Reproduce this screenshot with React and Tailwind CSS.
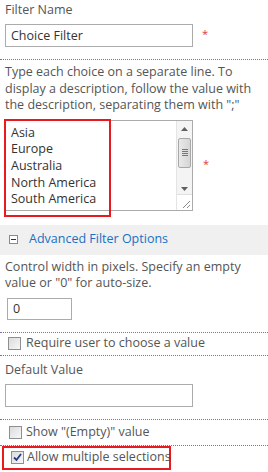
import React from 'react';

const Dotted = () => <div className="border-t border-dotted border-[#6f6fd0]" />;

const Box = ({ checked }) => (
  <span className="relative inline-block w-[13px] h-[13px] border border-[#8e8f8f] bg-gradient-to-br from-[#dcdcdc] to-[#f7f7f7] shrink-0">
    {checked && (
      <svg className="absolute left-[1px] top-[1px]" width="9" height="9" viewBox="0 0 9 9">
        <path d="M1 4.5 L3.5 7 L8 1" fill="none" stroke="#233a86" strokeWidth="1.8" />
      </svg>
    )}
  </span>
);

const Scrollbar = () => (
  <div className="w-[16px] h-full flex flex-col bg-[#f4f4f4] border-l border-[#e4e4e4]">
    <div className="h-[17px] flex items-center justify-center">
      <svg width="7" height="4" viewBox="0 0 7 4"><path d="M0 4 L3.5 0 L7 4 Z" fill="#606060" /></svg>
    </div>
    <div className="mx-[1px] h-[30px] rounded-[2px] border border-[#a8a8a8] bg-gradient-to-r from-[#e9e9e9] to-[#d6d6d6] flex flex-col items-center justify-center gap-[1px]">
      <div className="w-[6px] h-[1px] bg-[#777]" />
      <div className="w-[6px] h-[1px] bg-[#777]" />
      <div className="w-[6px] h-[1px] bg-[#777]" />
      <div className="w-[6px] h-[1px] bg-[#777]" />
    </div>
    <div className="flex-1 flex items-end justify-center pb-[3px]">
      <svg width="7" height="4" viewBox="0 0 7 4"><path d="M0 0 L3.5 4 L7 0 Z" fill="#606060" /></svg>
    </div>
    <div className="h-[16px] bg-white border-t border-[#e0e0e0] relative">
      <svg className="absolute right-[1px] bottom-[1px]" width="9" height="9" viewBox="0 0 9 9">
        <path d="M1 8 L8 1 M5 8 L8 5" stroke="#8a8a8a" strokeWidth="1" />
      </svg>
    </div>
  </div>
);

export default function App() {
  return (
    <div
      className="w-[268px] h-[472px] overflow-hidden bg-white text-[12.5px] text-[#555]"
      style={{ fontFamily: '"Open Sans", "Noto Sans", sans-serif' }}
    >
      <div className="px-[5px]">
        <div className="h-[20px] leading-[20px]">Filter Name</div>
        <div className="mt-[4px] flex items-start">
          <div className="w-[188px] h-[23px] border border-[#ababab] pl-[5px] leading-[21px] text-[#333]">Choice Filter</div>
          <span className="ml-[9px] mt-[2px] text-[#e03a3a] text-[11px]">*</span>
        </div>
      </div>
      <div className="mt-[12px]"><Dotted /></div>

      <div className="px-[5px] mt-[4px] leading-[16.5px]">
        Type each choice on a separate line. To display a description, follow the value with the description, separating them with ";"
      </div>

      <div className="px-[5px] mt-[6px] flex items-start">
        <div className="relative w-[188px] h-[91px] border border-[#ababab] flex">
          <div className="flex-1 pl-[5px] pt-[4px] leading-[16.7px] text-[#333]">
            <div>Asia</div>
            <div>Europe</div>
            <div>Australia</div>
            <div>North America</div>
            <div>South America</div>
          </div>
          <Scrollbar />
          <div className="absolute left-[-2px] top-[-2px] w-[107px] h-[98px] border-2 border-[#e8191f]" />
        </div>
        <span className="ml-[10px] mt-[36px] text-[#e03a3a] text-[11px]">*</span>
      </div>

      <div className="mt-[14px] h-[30px] bg-[#f0f0f0] flex items-center pl-[9px]">
        <span className="w-[9px] h-[9px] border border-[#8a8a8a] bg-white flex items-center justify-center">
          <span className="w-[5px] h-[1px] bg-[#333]" />
        </span>
        <span className="ml-[11px] text-[#1a6fc4]">Advanced Filter Options</span>
      </div>

      <div className="px-[5px] mt-[4px] leading-[16.5px]">
        Control width in pixels. Specify an empty value or "0" for auto-size.
      </div>
      <div className="px-[7px] mt-[6px]">
        <div className="w-[65px] h-[22px] border border-[#ababab] pl-[5px] leading-[20px] text-[#333]">0</div>
      </div>
      <div className="mt-[12px]"><Dotted /></div>

      <div className="h-[22px] pl-[8px] flex items-center gap-[5px]">
        <Box />
        <span>Require user to choose a value</span>
      </div>
      <Dotted />

      <div className="px-[5px]">
        <div className="mt-[5px] h-[18px] leading-[18px]">Default Value</div>
        <div className="mt-[5px] w-[188px] h-[23px] border border-[#ababab]" />
      </div>
      <div className="mt-[12px]"><Dotted /></div>

      <div className="h-[25px] pl-[9px] flex items-center gap-[4px]">
        <Box />
        <span>Show "(Empty)" value</span>
      </div>
      <Dotted />

      <div className="pl-[2px]">
        <div className="w-[169px] h-[24px] border-2 border-[#e8191f] pl-[7px] flex items-center gap-[3px] whitespace-nowrap">
          <Box checked />
          <span>Allow multiple selections</span>
        </div>
      </div>
    </div>
  );
}
